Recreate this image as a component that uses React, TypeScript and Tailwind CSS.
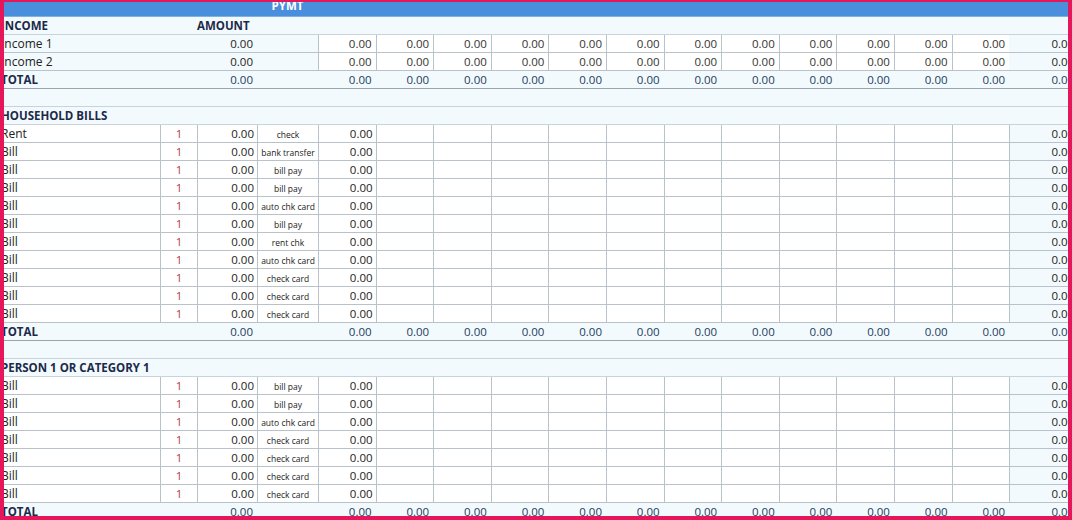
const months = ["JAN", "FEB", "MAR", "APR", "MAY", "JUN", "JUL", "AUG", "SEP", "OCT", "NOV", "DEC"];
const cols = "grid grid-cols-[156px_37px_60px_61px_repeat(12,57.6px)_59px] h-[18px] items-center";
const font = { fontFamily: '"Open Sans", "Liberation Sans", sans-serif' };

const household = ["check", "bank transfer", "bill pay", "bill pay", "auto chk card", "bill pay", "rent chk", "auto chk card", "check card", "check card", "check card"];
const person = ["bill pay", "bill pay", "auto chk card", "check card", "check card", "check card", "check card"];

function Label({ children, bold }: { children: React.ReactNode; bold?: boolean }) {
  return (
    <div className={`h-full overflow-hidden whitespace-nowrap flex items-center ${bold ? "font-bold text-[11.5px] text-[#1c2a4a]" : "text-[12px] text-[#222]"}`}>
      <span className="-ml-[3px]">{children}</span>
    </div>
  );
}

function HeaderRow() {
  return (
    <div className="grid grid-cols-[156px_37px_60px_61px_repeat(12,57.6px)_59px] h-[15px] items-end overflow-hidden bg-[#4a8fdc] text-white font-bold text-[11.5px] leading-[15px] border-b border-[#7fb0e6]">
      <div className="text-center -mt-[4px]">2011 BUDGET</div>
      <div className="text-center -mt-[4px]">DATES</div>
      <div className="text-center -mt-[4px]">AMOUNTS</div>
      <div className="text-center -mt-[4px]">PYMT TYPE</div>
      {months.map((m) => (
        <div key={m} className="text-center -mt-[4px]">{m}</div>
      ))}
      <div className="text-center -mt-[4px]">YEAR</div>
    </div>
  );
}

function SectionRow({ title, amount }: { title: string; amount?: boolean }) {
  return (
    <div className={`${cols} border-b border-[#c9d3da]`}>
      <Label bold>{title}</Label>
      <div />
      <div className={`col-span-2 text-[11.5px] font-bold text-[#1c2a4a] ${amount ? "" : "invisible"}`}>AMOUNT</div>
    </div>
  );
}

function IncomeRow({ name }: { name: string }) {
  return (
    <div className={`${cols} border-b border-[#b9c2c8]`}>
      <Label>{name}</Label>
      <div />
      <div className="text-right pr-1 text-[11.5px] text-[#222]">0.00</div>
      <div />
      {months.map((m) => (
        <div key={m} className="h-full bg-white border-l border-[#b9c2c8] text-right pr-1 text-[11.5px] text-[#333] flex items-center justify-end last:border-r">0.00</div>
      ))}
      <div className="text-right text-[11.5px] text-[#222] -mr-[6px]">0.00</div>
    </div>
  );
}

function BillRow({ name, type }: { name: string; type: string }) {
  return (
    <div className={`${cols} border-b border-[#b9c2c8] bg-white`}>
      <Label>{name}</Label>
      <div className="h-full border-l border-[#b9c2c8] text-center text-[11.5px] text-[#b03a48] flex items-center justify-center">1</div>
      <div className="h-full border-l border-[#b9c2c8] text-right pr-[3px] text-[11.5px] text-[#222] flex items-center justify-end">0.00</div>
      <div className="h-full border-l border-[#b9c2c8] text-center text-[8.5px] text-[#222] flex items-center justify-center pt-[3px] whitespace-nowrap">{type}</div>
      <div className="h-full border-l border-[#b9c2c8] text-right pr-[3px] text-[11.5px] text-[#222] flex items-center justify-end">0.00</div>
      {months.slice(1).map((m) => (
        <div key={m} className="h-full border-l border-[#b9c2c8]" />
      ))}
      <div className="h-full border-l border-[#b9c2c8] bg-[#f3fafd] text-right text-[11.5px] text-[#222] flex items-center justify-end -mr-[6px]">0.00</div>
    </div>
  );
}

function TotalRow() {
  return (
    <div className={`${cols} border-b border-[#9aa5ad] text-[11.5px] text-[#1c3a5e]`}>
      <Label bold>TOTAL</Label>
      <div />
      <div className="text-right pr-1">0.00</div>
      <div />
      {months.map((m) => (
        <div key={m} className="text-right pr-1">0.00</div>
      ))}
      <div className="text-right -mr-[6px]">0.00</div>
    </div>
  );
}

export default function App() {
  return (
    <div style={font} className="w-[1072px] h-[520px] overflow-hidden border-[#e5175a] border-t-2 border-l-4 border-r-4 border-b-4 bg-[#f3fafd]">
      <div className="h-full overflow-hidden">
        <HeaderRow />
        <SectionRow title="INCOME" amount />
        <IncomeRow name="Income 1" />
        <IncomeRow name="Income 2" />
        <TotalRow />
        <div className="h-[18px] border-b border-[#c9d3da]" />
        <SectionRow title="HOUSEHOLD BILLS" />
        {household.map((t, i) => (
          <BillRow key={i} name={i === 0 ? "Rent" : "Bill"} type={t} />
        ))}
        <TotalRow />
        <div className="h-[18px] border-b border-[#c9d3da]" />
        <SectionRow title="PERSON 1 OR CATEGORY 1" />
        {person.map((t, i) => (
          <BillRow key={i} name="Bill" type={t} />
        ))}
        <TotalRow />
      </div>
    </div>
  );
}
